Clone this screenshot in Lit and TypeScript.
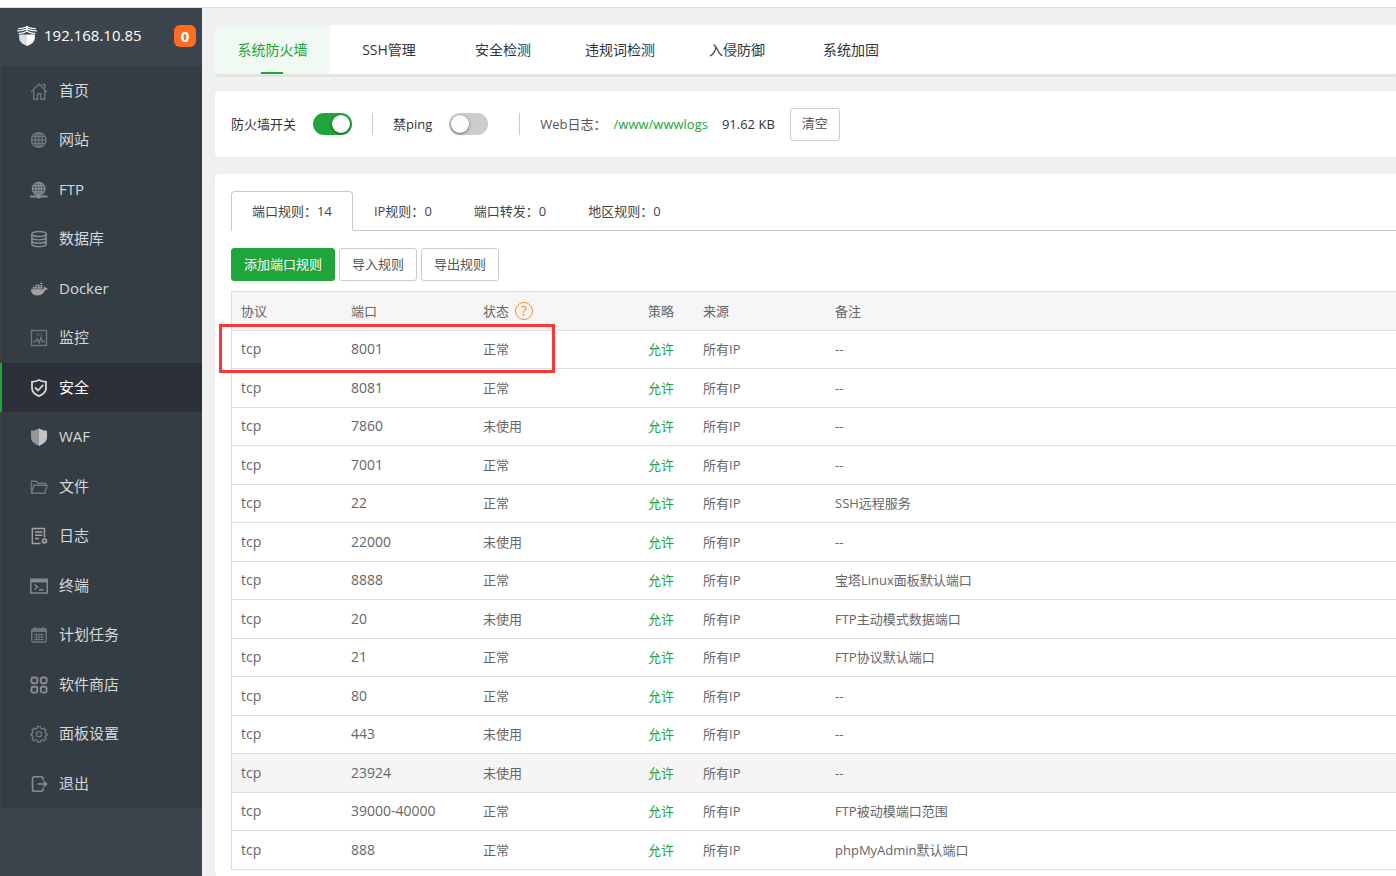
import { LitElement, html, css, svg } from "lit";
import { customElement, property, state } from "lit/decorators.js";
import { classMap } from "lit/directives/class-map.js";

const icons: Record<string, unknown> = {
  home: svg`<path d="M1 10 9 2l8 8M3.700 9v8.300h3.800v-5.500h3.300v5.500h3.900V9M12.300 2.500h2.400v3.800" />`,
  globe: svg`<circle cx="8.700" cy="9" r="7.300" /><ellipse cx="8.700" cy="9" rx="3.500" ry="7.300" /><path d="M1.500 9h14.400M8.700 1.700v14.600M2.600 5.500h12.200M2.600 12.500h12.200" />`,
  ftp: svg`<circle cx="8.700" cy="7.800" r="6.300" /><ellipse cx="8.700" cy="7.800" rx="2.800" ry="6.300" /><path d="M2.500 7.800h12.400M8.700 1.500v13M3.500 5h10.400M3.500 10.800h10.400" /><path d="M0 15.500h17.500" stroke-width="2" /><circle cx="8.700" cy="15.600" r="1.400" fill="currentColor" />`,
  database: svg`<ellipse cx="9" cy="4" rx="7.200" ry="2.500" /><path d="M1.800 4v10c0 1.400 3.200 2.600 7.200 2.600s7.200-1.200 7.200-2.600V4M1.800 7.300c0 1.400 3.200 2.600 7.200 2.600s7.200-1.200 7.200-2.600M1.800 10.700c0 1.400 3.200 2.600 7.200 2.600s7.200-1.200 7.200-2.600" />`,
  docker: svg`<g fill="currentColor" stroke="none"><path d="M1 9.300h12.200c.6-.4.800-1.200.5-2.200l.8-.7c.8.500 1.100 1.100 1.200 1.800.8-.1 1.500 0 2.100.4-.5 1.100-1.400 1.500-2.600 1.500-1.300 3.300-3.700 5.300-7.700 5.300C3.200 15.400.8 13 1 9.300Z" /><path d="M2.800 6.700h2v2h-2zM5.300 6.700h2v2h-2zM7.800 6.700h2v2h-2zM10.300 6.700h2v2h-2zM5.300 4.800h2v1.400h-2zM7.800 4.800h2v1.400h-2zM10.300 4.800h2v1.400h-2zM10.300 2.700h2v1.400h-2z" /></g>`,
  monitor: svg`<rect x="1.500" y="1.500" width="15" height="15" /><path d="M3 12.500h2.500L7.200 10l2 4 1.800-5.500 1.600 4H15" /><path d="M6 5.300h6.500" stroke-width="3" opacity=".35" />`,
  shield: svg`<g stroke-width="1.800"><path d="M9 1c2 1.200 4.300 1.700 7 1.800v6.500c0 3.800-3 6.200-7 7.900-4-1.700-7-4.100-7-7.900V2.800C4.700 2.700 7 2.200 9 1Z" /><path d="m5 8.500 3 3 5.300-5.600" /></g>`,
  waf: svg`<g stroke="none"><path d="M9 .3c2 1.500 4.500 2.300 8 2.500v7c0 3.700-3.500 6-8 8.100Z" fill="#c4c4c4" /><path d="M9 .3C7 1.800 4.500 2.600 1 2.800v7c0 3.700 3.500 6 8 8.100Z" fill="#979797" /></g>`,
  folder: svg`<path d="M1.500 15V3.200h5l1.500 2h7.500v2M1.500 15.300 4 7.200h13.200l-2.400 8.100H1.500Z" />`,
  log: svg`<path d="M10.500 16.500H2.300v-15h12.200v9M5 5h7.500M5 8.300h7.500M5 11.500h4" /><circle cx="14.500" cy="13.900" r="1.900" stroke-width="1.700" />`,
  terminal: svg`<rect x=".8" y="2.200" width="16.500" height="13.800" /><path d="M1 4h16" stroke-width="2.800" /><path d="m4.500 7.500 3 2.500-3 2.500M9 12.700h4.500" />`,
  calendar: svg`<rect x="1.700" y="2.700" width="14.600" height="13.300" rx="2" /><path d="M1.700 4.500h14.600" stroke-width="3" /><path d="M5 .8v2M13 .8v2" /><path d="M4 8.500h10M4 11h10M4 13.500h10M6.300 7.500v7M9 7.500v7M11.700 7.500v7" stroke-width=".9" />`,
  apps: svg`<g stroke-width="1.900"><rect x="1.500" y="1.500" width="5.800" height="5.800" rx="1.500" /><rect x="10.800" y="1.500" width="5.800" height="5.800" rx="1.500" /><rect x="1.500" y="10.800" width="5.800" height="5.800" rx="1.500" /><rect x="10.800" y="10.800" width="5.800" height="5.800" rx="1.500" /></g>`,
  gear: svg`<path d="m7.500 1.500-.5 2-1.500.7-1.900-1L2 5.200l1 1.700-.5 1.400-1.500.4v1.500l1.500.6.6 1.400-1 1.800 1.600 1.700 1.900-1 1.400.6.6 1.700h2.800l.6-1.700 1.400-.6 1.900 1 1.600-1.700-1-1.800.6-1.400 1.500-.6V8.700l-1.500-.4-.5-1.400 1-1.700-1.600-2-1.900 1-1.500-.7-.5-2Z" /><circle cx="9" cy="9.200" r="2.600" />`,
  exit: svg`<path d="M13 5V3.500a1.800 1.800 0 0 0-1.800-1.800H4.300a1.800 1.800 0 0 0-1.800 1.800v11a1.800 1.800 0 0 0 1.800 1.800h6.900a1.800 1.800 0 0 0 1.800-1.800V13M7.500 9H16M13.500 6.200 16.500 9l-3 2.800" stroke-width="1.600" />`,
};

const menu = [
  { icon: "home", label: "首页", tone: "dim" },
  { icon: "globe", label: "网站", tone: "dim" },
  { icon: "ftp", label: "FTP", tone: "mid" },
  { icon: "database", label: "数据库", tone: "mid" },
  { icon: "docker", label: "Docker", tone: "light" },
  { icon: "monitor", label: "监控", tone: "dim" },
  { icon: "shield", label: "安全", tone: "bright" },
  { icon: "waf", label: "WAF", tone: "light" },
  { icon: "folder", label: "文件", tone: "dim" },
  { icon: "log", label: "日志", tone: "light" },
  { icon: "terminal", label: "终端", tone: "mid" },
  { icon: "calendar", label: "计划任务", tone: "dim" },
  { icon: "apps", label: "软件商店", tone: "mid" },
  { icon: "gear", label: "面板设置", tone: "dim" },
  { icon: "exit", label: "退出", tone: "mid" },
];

const sections = ["系统防火墙", "SSH管理", "安全检测", "违规词检测", "入侵防御", "系统加固"];

const ruleTabs = [
  { label: "端口规则", count: 14 },
  { label: "IP规则", count: 0 },
  { label: "端口转发", count: 0 },
  { label: "地区规则", count: 0 },
];

const rules = [
  { port: "8001", used: true, note: "--" },
  { port: "8081", used: true, note: "--" },
  { port: "7860", used: false, note: "--" },
  { port: "7001", used: true, note: "--" },
  { port: "22", used: true, note: "SSH远程服务" },
  { port: "22000", used: false, note: "--" },
  { port: "8888", used: true, note: "宝塔Linux面板默认端口" },
  { port: "20", used: false, note: "FTP主动模式数据端口" },
  { port: "21", used: true, note: "FTP协议默认端口" },
  { port: "80", used: true, note: "--" },
  { port: "443", used: false, note: "--" },
  { port: "23924", used: false, note: "--", hover: true },
  { port: "39000-40000", used: true, note: "FTP被动模端口范围" },
  { port: "888", used: true, note: "phpMyAdmin默认端口" },
];

@customElement("side-menu")
export class SideMenu extends LitElement {
  @property() active = "安全";

  static styles = css`
    :host {
      display: block;
      background: #3c444d;
    }
    .brand {
      display: flex;
      align-items: center;
      box-sizing: border-box;
      height: 58px;
      padding: 0 6px 2px 17px;
      color: #fff;
      font-size: 15px;
      line-height: 20px;
    }
    .logo {
      width: 20px;
      height: 20px;
      margin-right: 7px;
    }
    .badge {
      margin-left: auto;
      width: 22px;
      border-radius: 6px;
      background: #ff6c22;
      font-weight: 700;
      line-height: 22px;
      text-align: center;
    }
    ul {
      margin: 0;
      padding: 0;
      list-style: none;
    }
    a {
      display: flex;
      align-items: center;
      gap: 11px;
      box-sizing: border-box;
      height: 49px;
      padding-left: 28px;
      border-left: 2px solid #423f40;
      background: #353d44;
      color: #d6d7d9;
      font-size: 15px;
      line-height: 20px;
      text-decoration: none;
    }
    li:nth-child(even) a {
      height: 50px;
    }
    .current a {
      border-color: #20a53a;
      background: #2c3038;
      color: #fff;
    }
    .label {
      padding-bottom: 2px;
    }
    .icon {
      width: 18px;
      height: 18px;
      fill: none;
      stroke: currentColor;
      stroke-width: 1.4;
    }
    .dim {
      color: #70757a;
    }
    .mid {
      color: #898c8f;
    }
    .light {
      color: #a2a3a5;
    }
    .bright {
      color: #d8d8da;
    }
  `;

  render() {
    return html`
      <div class="brand">
        <svg class="logo" viewBox="0 0 20 20" aria-hidden="true">
          <path d="M2 7.500h8V20C5.500 18.200 2.600 16 2.300 13Z" fill="#dedede" />
          <path d="M18 7.500h-8V20c4.500-1.800 7.400-4 7.700-7Z" fill="#fff" />
          <path d="M0 7.400C4 7.200 7 6.400 10 4.600c3 1.800 6 2.600 10 2.800v1H0Z" fill="#3c444d" />
          <path d="M1 2.700c3.500 0 6.500-.5 9-1.900 2.500 1.400 5.500 1.900 9 1.900M0 5c4-.1 7.200-.8 10-2.300C12.800 4.200 16 4.900 20 5M1.500 7.500C5 7.300 7.700 6.500 10 5.200c2.300 1.300 5 2.100 8.500 2.300" fill="none" stroke="#fff" stroke-width="1.100" />
          <path d="M10 0v5.500" stroke="#fff" stroke-width="1.400" />
        </svg>
        <span class="label">192.168.10.85</span>
        <span class="badge">0</span>
      </div>
      <ul>
        ${menu.map(
          (item) => html`<li class=${classMap({ current: item.label === this.active })}>
            <a href="#"><svg class="icon ${item.tone}" viewBox="0 0 18 18" aria-hidden="true">${icons[item.icon]}</svg><span class="label">${item.label}</span></a>
          </li>`
        )}
      </ul>
    `;
  }
}

@customElement("rule-table")
export class RuleTable extends LitElement {
  static styles = css`
    :host {
      display: block;
      position: relative;
    }
    table {
      width: 100%;
      table-layout: fixed;
      border: solid #ddd;
      border-width: 1px 0 0 1px;
      border-spacing: 0;
      color: #666;
      font-size: 13px;
      line-height: 18px;
    }
    .protocol,
    .port {
      width: 110px;
    }
    .port,
    .source {
      width: 132px;
    }
    .status {
      width: 165px;
    }
    .policy {
      width: 55px;
    }
    th,
    td {
      box-sizing: border-box;
      height: 38px;
      padding: 0 9px 1px;
      border-bottom: 1px solid #ddd;
      font-weight: 400;
      text-align: left;
      white-space: nowrap;
    }
    th {
      height: 39px;
      background: #f6f6f6;
    }
    tr:nth-child(even) td {
      height: 39px;
    }
    .hover td {
      background: #f5f5f5;
    }
    .code {
      font-size: 14px;
    }
    .allow {
      color: #20a53a;
    }
    .heading {
      display: flex;
      align-items: center;
      gap: 6px;
    }
    .help {
      width: 18px;
      height: 18px;
      border: 1px solid #ff8c1a;
      border-radius: 50%;
      box-sizing: border-box;
      color: #ff8c1a;
      font-size: 14px;
      line-height: 16px;
      text-align: center;
      text-decoration: none;
    }
    .mark {
      position: absolute;
      top: 33px;
      left: -12px;
      box-sizing: border-box;
      width: 336px;
      height: 49px;
      border: 3px solid #fb3838;
      pointer-events: none;
    }
  `;

  render() {
    return html`
      <table>
        <colgroup>
          <col class="protocol" />
          <col class="port" />
          <col class="status" />
          <col class="policy" />
          <col class="source" />
          <col />
        </colgroup>
        <thead>
          <tr>
            <th>协议</th>
            <th>端口</th>
            <th><span class="heading">状态<a class="help" href="#">?</a></span></th>
            <th>策略</th>
            <th>来源</th>
            <th>备注</th>
          </tr>
        </thead>
        <tbody>
          ${rules.map(
            (rule) => html`<tr class=${classMap({ hover: !!rule.hover })}>
              <td class="code">tcp</td>
              <td class="code">${rule.port}</td>
              <td>${rule.used ? "正常" : "未使用"}</td>
              <td class="allow">允许</td>
              <td>所有IP</td>
              <td>${rule.note}</td>
            </tr>`
          )}
        </tbody>
      </table>
      <div class="mark"></div>
    `;
  }
}

@customElement("app-root")
export class AppRoot extends LitElement {
  @state() private section = 0;
  @state() private tab = 0;

  static styles = css`
    :host {
      display: flex;
      flex-direction: column;
      min-height: 100vh;
      background: #f0f0f0;
      font-family: "Open Sans", "Noto Sans CJK SC", sans-serif;
      color: #333;
      font-size: 13px;
      line-height: 18px;
    }
    button {
      font: inherit;
      cursor: pointer;
    }
    .topline {
      height: 7px;
      border-bottom: 1px solid #dcdcdc;
      background: #fff;
    }
    .layout {
      flex: 1;
      display: grid;
      grid-template-columns: 202px minmax(0, 1fr);
    }
    main {
      display: flex;
      flex-direction: column;
      gap: 17px;
      padding: 17px 0 0 13px;
    }
    .sections {
      display: grid;
      grid-template-columns: 115px 118px 110px 124px 110px 118px;
      height: 49px;
      border-radius: 4px 0 0 4px;
      background: #fff;
      box-shadow: 0 3px 1px #e3e3e3;
    }
    .section {
      display: grid;
      place-items: center;
      position: relative;
      padding: 0;
      border: 0;
      background: none;
      color: #333;
      font-size: 14px;
    }
    .section.on {
      border-radius: 4px 0 0 4px;
      background: #f0f9f2;
      color: #20a53a;
    }
    .section.on::after {
      content: "";
      position: absolute;
      bottom: 0;
      left: 46px;
      width: 22px;
      height: 2px;
      background: #20a53a;
    }
    .card {
      border-radius: 4px 0 0 4px;
      background: #fff;
      box-shadow: 0 0 1px #e3e3e3;
    }
    .switches {
      display: flex;
      align-items: center;
      height: 66px;
      padding: 0 16px;
      box-sizing: border-box;
    }
    .toggle {
      display: flex;
      align-items: center;
      gap: 17px;
    }
    .switch {
      appearance: none;
      width: 39px;
      height: 22px;
      margin: 0;
      padding: 2px;
      box-sizing: border-box;
      border-radius: 11px;
      background: #ccc;
    }
    .switch::before {
      content: "";
      display: block;
      width: 18px;
      height: 18px;
      border-radius: 50%;
      background: #fbfbfb;
      box-shadow: 0 1px 3px rgba(0, 0, 0, 0.5);
    }
    .switch:checked {
      padding-left: 19px;
      background: #20a53a;
    }
    .divider {
      width: 1px;
      height: 22px;
      margin: 0 20px;
      background: #ccc;
    }
    .wide {
      margin-left: 31px;
    }
    .weblog {
      display: flex;
      align-items: center;
      color: #555;
    }
    .weblog a {
      margin: 0 14px 0 7px;
      color: #20a53a;
      text-decoration: none;
    }
    .size {
      margin-right: 15px;
      color: #333;
    }
    .button {
      height: 33px;
      padding: 0 12px 2px;
      border: 1px solid #ccc;
      border-radius: 3px;
      background: #fff;
      color: #555;
    }
    .button.primary {
      border-color: #20a53a;
      background: #20a53a;
      color: #fff;
    }
    .button.small {
      padding: 0 11px 2px;
    }
    .rules {
      flex: 1;
      padding: 17px 0 6px 16px;
    }
    .tabs {
      display: flex;
      height: 40px;
      box-sizing: border-box;
      border-bottom: 1px solid #c8c8d4;
    }
    .tab {
      height: 40px;
      padding: 0 20px;
      border: 1px solid transparent;
      border-radius: 4px 4px 0 0;
      background: none;
      color: #444;
    }
    .tab.on {
      border-color: #c8c8d4;
      border-bottom-color: #fff;
      background: #fff;
    }
    .actions {
      display: flex;
      gap: 4px;
      padding: 17px 0 10px;
    }
  `;

  render() {
    return html`
      <div class="topline"></div>
      <div class="layout">
        <side-menu></side-menu>
        <main>
          <nav class="sections">
            ${sections.map(
              (label, i) => html`<button class=${classMap({ section: true, on: i === this.section })} @click=${() => (this.section = i)}>${label}</button>`
            )}
          </nav>
          <section class="card switches">
            <label class="toggle">防火墙开关<input class="switch" type="checkbox" role="switch" checked /></label>
            <span class="divider"></span>
            <label class="toggle">禁ping<input class="switch" type="checkbox" role="switch" /></label>
            <span class="divider wide"></span>
            <div class="weblog">
              <span>Web日志：</span><a href="#">/www/wwwlogs</a>
              <span class="size">91.62 KB</span>
              <button class="button small">清空</button>
            </div>
          </section>
          <section class="card rules">
            <div class="tabs">
              ${ruleTabs.map(
                (item, i) => html`<button class=${classMap({ tab: true, on: i === this.tab })} @click=${() => (this.tab = i)}>${item.label}：${item.count}</button>`
              )}
            </div>
            <div class="actions">
              <button class="button primary">添加端口规则</button>
              <button class="button">导入规则</button>
              <button class="button">导出规则</button>
            </div>
            <rule-table></rule-table>
          </section>
        </main>
      </div>
    `;
  }
}
